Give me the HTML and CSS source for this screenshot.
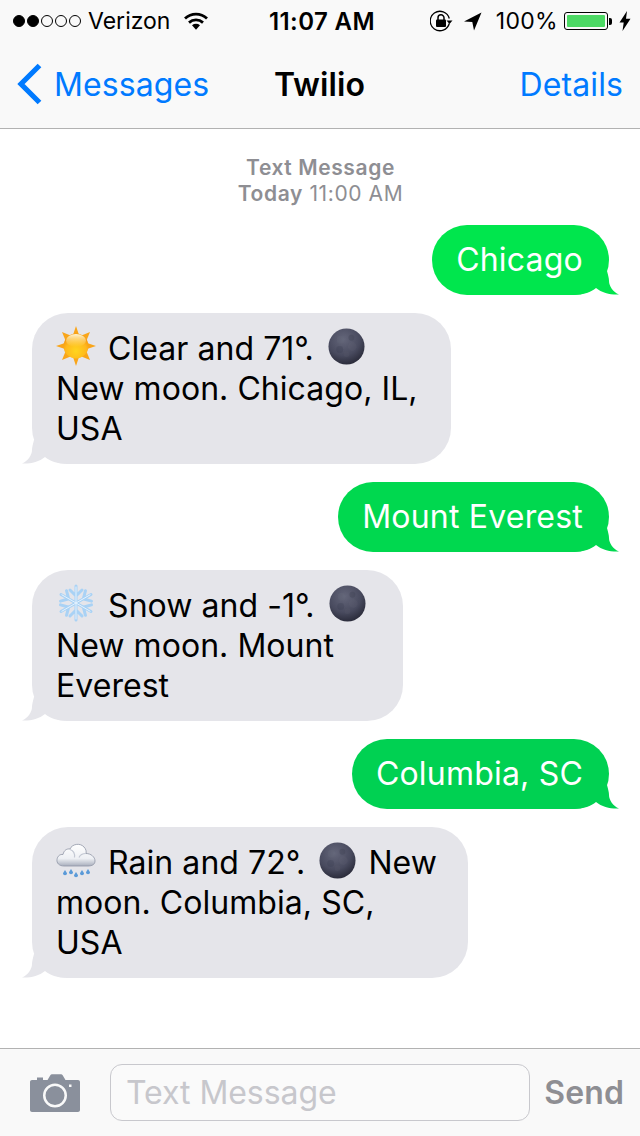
FILE: index.html
```html
<!DOCTYPE html>
<html lang="en">
<head>
    <meta charset="UTF-8">
    <meta name="viewport" content="width=device-width, initial-scale=1.0">
    <title>Twilio :: Messages</title>
    <link rel="stylesheet" href="styles.css">
</head>
<body>
    <svg class="sprites" width="0" height="0" aria-hidden="true">
        <defs>
            <radialGradient id="moon-fill" cx="42%" cy="30%" r="75%">
                <stop offset="0" stop-color="#64667a"/>
                <stop offset="0.6" stop-color="#484a5e"/>
                <stop offset="1" stop-color="#262735"/>
            </radialGradient>
            <radialGradient id="sun-fill" cx="50%" cy="70%" r="60%">
                <stop offset="0" stop-color="#ffd51f"/>
                <stop offset="0.7" stop-color="#ffb81c"/>
                <stop offset="1" stop-color="#f59b12"/>
            </radialGradient>
            <linearGradient id="sun-shine" x1="0" y1="0" x2="0" y2="1">
                <stop offset="0" stop-color="#fff6d6"/>
                <stop offset="1" stop-color="#ffe27a" stop-opacity="0"/>
            </linearGradient>
            <linearGradient id="cloud-fill" x1="0" y1="0" x2="0" y2="1">
                <stop offset="0" stop-color="#ffffff"/>
                <stop offset="0.65" stop-color="#eef0f4"/>
                <stop offset="1" stop-color="#a9afbd"/>
            </linearGradient>
            <symbol id="moon" viewBox="0 0 38 38">
                <circle cx="19" cy="19" r="18.5" fill="url(#moon-fill)"/>
                <circle cx="13" cy="12" r="4" fill="#6a6c7c" opacity=".2"/>
                <circle cx="24" cy="10" r="3" fill="#383a4b" opacity=".3"/>
                <circle cx="25" cy="19" r="4.5" fill="#6a6c7c" opacity=".18"/>
                <circle cx="12" cy="22" r="3.5" fill="#35374a" opacity=".25"/>
                <circle cx="19" cy="27" r="3" fill="#5d5f70" opacity=".2"/>
            </symbol>
            <symbol id="tail" viewBox="0 0 46 24">
                <path d="M12 0c-1 4-2 7-2 10 0 5-4 11-10 13.500 8 .5 17-1.500 23-6.500 5 4 12 7 23 7V0z"/>
            </symbol>
        </defs>
    </svg>

    <div class="status-bar">
        <div class="status-left">
            <span class="signal">
                <i class="dot on"></i><i class="dot on"></i><i class="dot"></i><i class="dot"></i><i class="dot"></i>
            </span>
            <span class="carrier">Verizon</span>
            <svg class="wifi" viewBox="0 0 24 18" width="24" height="18">
                <path d="M1 6.500C7.300.6 16.700.6 23 6.500" fill="none" stroke="#000" stroke-width="2.800"/>
                <path d="M5 10.600c4-3.600 10-3.600 14 0" fill="none" stroke="#000" stroke-width="2.800"/>
                <path d="M8 13.200c2.400-1.900 5.600-1.900 8 0l-4 4.600z" fill="#000"/>
            </svg>
        </div>
        <div class="status-time">11:07 AM</div>
        <div class="status-right">
            <svg class="rotation" viewBox="0 0 24 22" width="24" height="22">
                <path d="M20.300 13.500A9.700 9.700 0 1 1 20.300 8.500" fill="none" stroke="#000" stroke-width="1.300" transform="translate(-1 0)"/>
                <path d="M16.500 10.500h6l-3 3.500z" fill="#000"/>
                <rect x="6" y="9.500" width="10" height="7.500" rx="1" fill="#000"/>
                <path d="M8 10V7.800a3 3 0 0 1 6 0V10" fill="none" stroke="#000" stroke-width="1.500"/>
            </svg>
            <svg class="location" viewBox="0 0 18 19" width="18" height="19">
                <path d="M17.500.5 0 9.500l8.300.4 1.700 8.600z" fill="#000"/>
            </svg>
            <span class="battery-text">100%</span>
            <span class="battery"><span class="battery-level"></span></span>
            <span class="battery-nub"></span>
            <svg class="bolt" viewBox="0 0 12 20" width="12" height="20">
                <path d="M8 0 .5 11.500h4.200L3.500 20 11.500 7.800H7z" fill="#000"/>
            </svg>
        </div>
    </div>

    <nav class="nav-bar">
        <a class="nav-back">
            <svg viewBox="0 0 26 42" width="26" height="42">
                <path d="M23.500 2.500 5 21l18.500 18.500" fill="none" stroke="#007aff" stroke-width="5.200"/>
            </svg>
            <span>Messages</span>
        </a>
        <div class="nav-title">Twilio</div>
        <a class="nav-details">Details</a>
    </nav>

    <main class="thread">
        <div class="thread-meta">
            <div><b>Text Message</b></div>
            <div><b>Today</b> 11:00 AM</div>
        </div>

        <div class="bubble sent tone-1">
            Chicago
            <svg class="tail" width="46" height="24"><use href="#tail"/></svg>
        </div>

        <div class="bubble received width-clear">
            <svg class="emoji" viewBox="0 0 40 40" width="40" height="40">
                <g fill="#f9a51a">
                    <path d="M20 0l3 9h-6z"/><path d="M20 40l3-9h-6z"/>
                    <path d="M0 20l9-3v6z"/><path d="M40 20l-9-3v6z"/>
                    <path d="M6 6l8.500 3.500-5 5z"/><path d="M34 6l-8.500 3.500 5 5z"/>
                    <path d="M6 34l8.500-3.500-5-5z"/><path d="M34 34l-8.500-3.500 5-5z"/>
                </g>
                <circle cx="20" cy="20" r="12.500" fill="url(#sun-fill)"/>
                <ellipse cx="20" cy="14.500" rx="10" ry="6.500" fill="url(#sun-shine)"/>
            </svg>
            Clear and 71°. <svg class="moon-icon" width="37" height="37"><use href="#moon"/></svg><br>
            New moon. Chicago, IL,<br>
            USA
            <svg class="tail" width="46" height="24"><use href="#tail"/></svg>
        </div>

        <div class="bubble sent tone-2">
            Mount Everest
            <svg class="tail" width="46" height="24"><use href="#tail"/></svg>
        </div>

        <div class="bubble received width-snow">
            <svg class="emoji" viewBox="0 0 40 40" width="40" height="40">
                <g fill="none" stroke="#a9d2f5" stroke-width="3" stroke-linecap="round">
                    <path d="M20 3v34M14 7l6 6 6-6M14 33l6-6 6 6"/>
                    <path d="M5 11.500l30 17M4.500 18.100l8.200-2.200-2.200-8.200M35.500 21.900l-8.200 2.200 2.200 8.200"/>
                    <path d="M35 11.500 5 28.500M35.500 18.100l-8.200-2.200 2.200-8.200M4.500 21.900l8.200 2.200-2.200 8.200"/>
                </g>
                <g fill="none" stroke="#e6f3fe" stroke-width="1" stroke-linecap="round">
                    <path d="M20 4v32M5.900 11.800l28.200 16.400M34.100 11.800 5.900 28.200"/>
                </g>
            </svg>
            Snow and -1°. <svg class="moon-icon" width="37" height="37"><use href="#moon"/></svg><br>
            New moon. Mount<br>
            Everest
            <svg class="tail" width="46" height="24"><use href="#tail"/></svg>
        </div>

        <div class="bubble sent tone-3">
            Columbia, SC
            <svg class="tail" width="46" height="24"><use href="#tail"/></svg>
        </div>

        <div class="bubble received width-rain">
            <svg class="emoji" viewBox="0 0 40 40" width="40" height="40">
                <path d="M8 26C3 26 .5 23 1 19.500 1.500 16 4 14 7 14.500 8 10 11 8.500 14 9 16 4 24 2.500 28 7c2 2 2.500 4.500 2 6.500 5 0 9 3.500 9 7.500 0 3.500-3 5-7 5z" fill="url(#cloud-fill)" stroke="#8f95a6" stroke-width=".8"/>
                <path d="M14 9.500c3 1 5 4 4.500 8M30 13.500c-3 0-6 1.500-7 4" fill="none" stroke="#c3c8d3" stroke-width="1.200"/>
                <g fill="#5a9ad8">
                    <path d="M9 30l2 3.300a2 2 0 1 1-4 0z"/>
                    <path d="M15 29l2 3.300a2 2 0 1 1-4 0z"/>
                    <path d="M20 32l2 3.300a2 2 0 1 1-4 0z"/>
                    <path d="M26 30l2 3.300a2 2 0 1 1-4 0z"/>
                    <path d="M32 29l2 3.300a2 2 0 1 1-4 0z"/>
                </g>
            </svg>
            Rain and 72°. <svg class="moon-icon" width="37" height="37"><use href="#moon"/></svg> New<br>
            moon. Columbia, SC,<br>
            USA
            <svg class="tail" width="46" height="24"><use href="#tail"/></svg>
        </div>
    </main>

    <footer class="input-bar">
        <svg class="camera" viewBox="0 0 50 38" width="50" height="38">
            <path fill-rule="evenodd" fill="#8a909c" d="M2 6h5V3.500h6V6h4.500l3-5c.3-.5.8-.8 1.400-.8h9.200c.6 0 1.100.3 1.400.8l3 5H48c1.100 0 2 .9 2 2v28c0 1.100-.9 2-2 2H2c-1.100 0-2-.9-2-2V8c0-1.100.9-2 2-2zM25 9.500a12 12 0 1 0 0 24 12 12 0 0 0 0-24zm0 2.500a9.500 9.500 0 1 1 0 19 9.500 9.500 0 0 1 0-19zM39 10.500h2.500v2.500H39z"/>
        </svg>
        <div class="input-box">Text Message</div>
        <div class="send">Send</div>
    </footer>
</body>
</html>
```

FILE: styles.css
```css
:root {
    --ios-blue: #007aff;
    --ios-gray: #8e8e93;
    --bubble-gray: #e5e5ea;
    --bar-bg: #f9f9f9;
    --bar-line: #b2b2b2;
}

* {
    box-sizing: border-box;
    margin: 0;
    padding: 0;
}

body {
    width: 640px;
    height: 1136px;
    display: flex;
    flex-direction: column;
    overflow: hidden;
    background-color: #fff;
    color: #000;
    font-family: Inter, Roboto, "Liberation Sans", sans-serif;
}

.sprites {
    position: absolute;
}

/* status bar */
.status-bar {
    height: 40px;
    flex: none;
    display: grid;
    grid-template-columns: 1fr auto 1fr;
    align-items: center;
    padding: 2px 9px 0 13px;
    background-color: var(--bar-bg);
    font-size: 23px;
}

.status-left,
.status-right {
    display: flex;
    align-items: center;
}

.status-right {
    justify-content: flex-end;
}

.signal {
    display: flex;
    gap: 2px;
}

.dot {
    width: 12px;
    height: 12px;
    border: 1px solid #000;
    border-radius: 50%;
}

.dot.on {
    background-color: #000;
}

.carrier {
    margin-left: 7px;
}

.wifi {
    margin-left: 14px;
}

.status-time {
    font-size: 24px;
    font-weight: 600;
    letter-spacing: 0.4px;
}

.rotation {
    margin-right: 10px;
}

.location {
    margin-right: 14px;
}

.battery-text {
    margin-right: 6px;
    letter-spacing: 0.3px;
}

.battery {
    width: 44px;
    height: 18px;
    padding: 2px;
    border: 1px solid #000;
    border-radius: 3px;
}

.battery-level {
    display: block;
    height: 100%;
    background-color: #4cd964;
    border-radius: 1px;
}

.battery-nub {
    width: 3px;
    height: 7px;
    margin: 0 7px 0 1px;
    background-color: #000;
    border-radius: 0 2px 2px 0;
}

/* nav */
.nav-bar {
    height: 89px;
    flex: none;
    display: grid;
    grid-template-columns: 1fr auto 1fr;
    align-items: center;
    padding: 0 17px 0 16px;
    background-color: var(--bar-bg);
    border-bottom: 1px solid var(--bar-line);
    font-size: 32px;
    letter-spacing: 0.1px;
    color: var(--ios-blue);
}

.nav-back {
    display: flex;
    align-items: center;
    gap: 12px;
}

.nav-title {
    font-weight: 600;
    color: #000;
}

.nav-details {
    text-align: right;
}

/* messages */
.thread {
    flex: 1;
    display: flex;
    flex-direction: column;
    align-items: flex-start;
    gap: 18px;
    padding: 0 31px 0 32px;
}

.thread-meta {
    align-self: stretch;
    padding-top: 26px;
    text-align: center;
    font-size: 21px;
    line-height: 26px;
    letter-spacing: 0.6px;
    color: var(--ios-gray);
}

.thread-meta b {
    font-weight: 600;
}

.bubble {
    position: relative;
    padding: 15px 24px;
    border-radius: 36px;
    background-color: var(--fill);
    font-size: 32px;
    line-height: 40px;
    white-space: nowrap;
}

.sent {
    align-self: flex-end;
    padding-right: 26px;
    letter-spacing: 0.2px;
    color: #fff;
}

.tone-1 {
    --fill: #00e64d;
}

.tone-2 {
    --fill: #00d84f;
}

.tone-3 {
    --fill: #00d152;
}

.received {
    --fill: var(--bubble-gray);
    padding-top: 16px;
    letter-spacing: 0.05px;
}

.width-clear {
    width: 419px;
}

.width-snow {
    width: 371px;
}

.width-rain {
    width: 436px;
}

.tail {
    position: absolute;
    bottom: 0;
    fill: var(--fill);
}

.sent .tail {
    right: -10px;
    transform: scaleX(-1);
}

.received .tail {
    left: -10px;
}

.emoji {
    margin: -6px 3px -6px 0;
}

.moon-icon {
    margin: -6px 3px -5px 5px;
}

/* input bar */
.input-bar {
    height: 88px;
    flex: none;
    display: flex;
    align-items: center;
    padding: 0 16px 0 30px;
    background-color: var(--bar-bg);
    border-top: 1px solid var(--bar-line);
}

.camera {
    flex: none;
}

.input-box {
    width: 420px;
    height: 57px;
    margin-left: 30px;
    padding-left: 15px;
    border: 1px solid #c8c8cd;
    border-radius: 12px;
    background-color: #fafafa;
    font-size: 32px;
    line-height: 55px;
    letter-spacing: -0.05px;
    color: #c7c7cc;
}

.send {
    margin-left: auto;
    font-size: 32px;
    font-weight: 600;
    letter-spacing: 0.1px;
    color: var(--ios-gray);
}
```
